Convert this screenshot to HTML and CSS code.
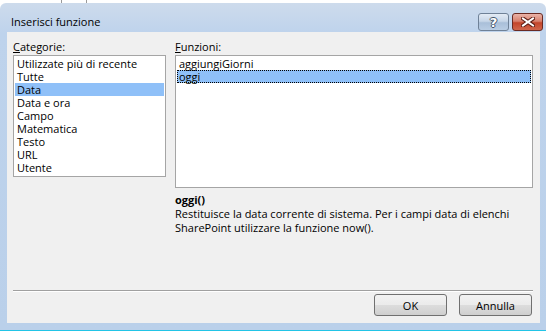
FILE: index.html
```html
<!DOCTYPE html>
<html lang="it">

<head>
    <meta charset="UTF-8">
    <title>Inserisci funzione</title>
    <link rel="stylesheet" href="styles.css">
</head>

<body>
    <div class="desk">
        <div class="bg-box"></div>
        <div class="window">
            <div class="titlebar">
                <span class="title">Inserisci funzione</span>
                <div class="caption-buttons">
                    <div class="cap-btn help"><span>?</span></div>
                    <div class="cap-btn close">
                        <svg width="14" height="10" viewBox="0 0 14 10">
                            <path d="M2 1.5 L12 8.5 M12 1.5 L2 8.5" stroke="#5a1a12" stroke-width="4" stroke-linecap="square" />
                            <path d="M2 1.5 L12 8.5 M12 1.5 L2 8.5" stroke="#ffffff" stroke-width="2" stroke-linecap="square" />
                        </svg>
                    </div>
                </div>
            </div>

            <div class="dialog">
                <div class="main">
                    <div class="col col-left">
                        <div class="label"><u>C</u>ategorie:</div>
                        <ul class="listbox cat-list">
                            <li>Utilizzate più di recente</li>
                            <li>Tutte</li>
                            <li class="selected">Data</li>
                            <li>Data e ora</li>
                            <li>Campo</li>
                            <li>Matematica</li>
                            <li>Testo</li>
                            <li>URL</li>
                            <li>Utente</li>
                        </ul>
                    </div>
                    <div class="col col-right">
                        <div class="label"><u>F</u>unzioni:</div>
                        <ul class="listbox fn-list">
                            <li>aggiungiGiorni</li>
                            <li class="selected focused">oggi</li>
                        </ul>
                        <div class="fn-name">oggi()</div>
                        <p class="fn-desc">Restituisce la data corrente di sistema. Per i campi data di elenchi<br>SharePoint utilizzare la funzione now().</p>
                    </div>
                </div>

                <div class="footer">
                    <button class="btn">OK</button>
                    <button class="btn">Annulla</button>
                </div>
            </div>
        </div>
    </div>
</body>

</html>
```

FILE: styles.css
```css
body {
    margin: 0;
    padding: 0;
    background-color: #ffffff;
    font-family: "Open Sans", "Noto Sans", sans-serif;
    font-size: 11px;
    color: #000;
    overflow: hidden;
}

.desk {
    position: relative;
    width: 546px;
    height: 331px;
    padding-top: 3px;
    box-sizing: border-box;
}

/* piece of the page behind the dialog */
.bg-box {
    position: absolute;
    top: -2px;
    left: 61px;
    width: 24px;
    height: 4px;
    border: 1px solid #9a9a9a;
}

.window {
    position: relative;
    width: 546px;
    height: 328px;
    box-sizing: border-box;
    padding: 0 6px 7px 7px;
    background: linear-gradient(to bottom, #cddbec 0px, #bed3ec 30px, #bad0ea 100%);
    border-radius: 6px 6px 0 0;
    border-bottom: 1px solid #22c4e6;
    display: flex;
    flex-direction: column;
}

.titlebar {
    height: 29px;
    display: flex;
    justify-content: space-between;
    align-items: flex-start;
}

.title {
    margin-left: 4px;
    margin-top: 11px;
    font-size: 11px;
    line-height: 15px;
    color: #000;
}

.caption-buttons {
    display: flex;
    gap: 3px;
    margin-top: 10px;
    margin-right: -3px;
}

.cap-btn {
    width: 29px;
    height: 16px;
    border: 1px solid #5f7185;
    border-radius: 3px;
    display: flex;
    align-items: center;
    justify-content: center;
}

.cap-btn.help {
    background: linear-gradient(to bottom, #e3ebf5 0%, #c7d6e8 45%, #a9bfd9 55%, #b9cde4 100%);
    border-color: #6f8197;
}

.cap-btn.help span {
    font-family: "DejaVu Sans", sans-serif;
    font-weight: bold;
    font-size: 13px;
    line-height: 13px;
    color: #ffffff;
    text-shadow: -1px 0 #44546a, 1px 0 #44546a, 0 -1px #44546a, 0 1px #44546a;
}

.cap-btn.close {
    background: linear-gradient(to bottom, #eab3a8 0%, #d8806d 45%, #c3452b 55%, #d0664c 100%);
    border-color: #6a2a22;
}

.dialog {
    flex: 1;
    background-color: #f0f0f0;
    display: flex;
    flex-direction: column;
}

.main {
    flex: 1;
    display: flex;
    gap: 9px;
    padding: 8px 7px 0 6px;
}

.col-left {
    width: 153px;
}

.col-right {
    flex: 1;
}

.label {
    line-height: 13px;
    margin-bottom: 2px;
}

.listbox {
    list-style-type: none;
    margin: 0;
    padding: 1px;
    background-color: #fff;
    border: 1px solid #a5a5a5;
}

.cat-list {
    height: 118px;
}

.fn-list {
    height: 129px;
}

.listbox li {
    height: 13px;
    line-height: 13px;
    padding-left: 2px;
    white-space: nowrap;
    box-sizing: border-box;
}

.listbox li.selected {
    background-color: #8fc0f8;
}

.listbox li.focused {
    outline: 1px dotted #000;
    outline-offset: -1px;
}

.fn-name {
    margin-top: 5px;
    font-weight: bold;
    line-height: 14px;
}

.fn-desc {
    margin: 0;
    line-height: 14px;
}

.footer {
    margin: 0 7px 0 6px;
    border-top: 1px solid #a0a0a0;
    box-shadow: inset 0 1px 0 #ffffff;
    padding: 3px 1px 7px 0;
    display: flex;
    justify-content: flex-end;
    gap: 12px;
}

.btn {
    width: 73px;
    height: 22px;
    font-family: "Open Sans", "Noto Sans", sans-serif;
    font-size: 11px;
    color: #000;
    border: 1px solid #707070;
    border-radius: 3px;
    background: linear-gradient(to bottom, #f2f2f2 0%, #ebebeb 50%, #dddddd 50%, #cfcfcf 100%);
    padding: 0;
}
```
